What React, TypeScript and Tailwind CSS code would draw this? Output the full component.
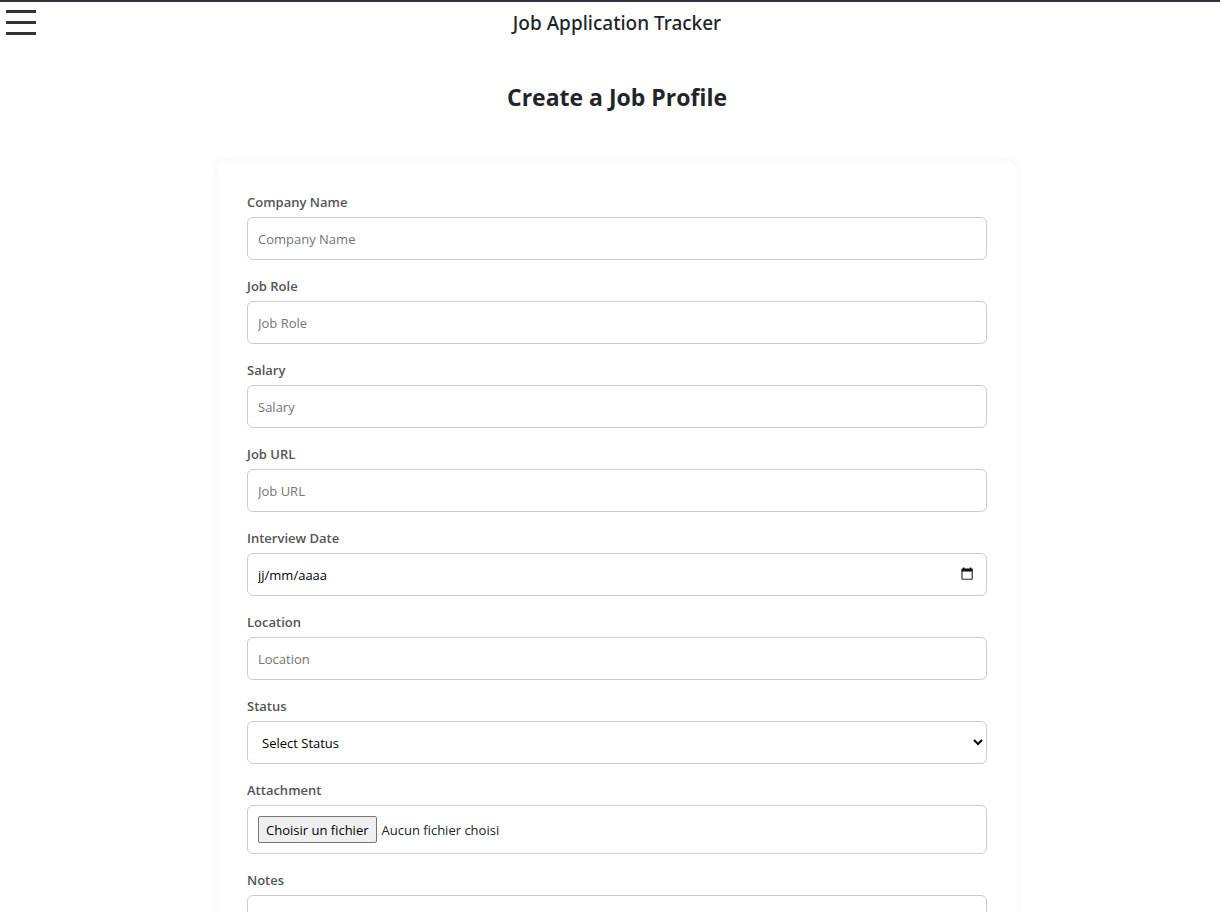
import React from "react";

const label = "mb-[3px] block text-[13px] leading-[23px] font-semibold text-[#555]";
const control =
  "block h-[43px] w-full rounded-md border border-[#ccc] bg-white px-[10px] text-[13px] text-black placeholder:text-[#757575]";

function TextField({ id, text }: { id: string; text: string }) {
  return (
    <div>
      <label htmlFor={id} className={label}>
        {text}
      </label>
      <input id={id} type="text" placeholder={text} className={control} />
    </div>
  );
}

function DateField() {
  return (
    <div>
      <label htmlFor="date" className={label}>
        Interview Date
      </label>
      <div className="flex h-[43px] w-full items-center rounded-md border border-[#ccc] bg-white pr-3 pl-[10px]">
        <input
          id="date"
          type="text"
          placeholder="jj/mm/aaaa"
          className="h-full min-w-0 flex-1 text-[13px] text-black outline-none placeholder:text-black"
        />
        <button type="button" aria-label="Interview Date" className="shrink-0 pb-[2px]">
          <svg width="14" height="14" viewBox="0 0 14 14">
            <path d="M3 0.6h1.4v2H3zM9.8 0.6h1.4v2H9.8z" fill="#000" />
            <path d="M1.5 2.2a.7.7 0 0 1 .7-.7h9.8a.7.7 0 0 1 .7.7V4.5H1.5z" fill="#000" />
            <rect x="2" y="3" width="10.2" height="9.3" rx=".6" fill="none" stroke="#222" strokeWidth="1.1" />
          </svg>
        </button>
      </div>
    </div>
  );
}

function StatusField() {
  return (
    <div>
      <label htmlFor="status" className={label}>
        Status
      </label>
      <select
        id="status"
        className="block h-[43px] w-full rounded-md border border-[#ccc] bg-white px-[10px] text-[13px] text-black"
      >
        <option>Select Status</option>
      </select>
    </div>
  );
}

function FileField() {
  return (
    <div>
      <label htmlFor="file" className={label}>
        Attachment
      </label>
      <label
        htmlFor="file"
        className="relative flex h-[49px] w-full items-center gap-[5px] rounded-md border border-[#ccc] bg-white px-[10px] text-[13px] text-[#212529]"
      >
        <input id="file" type="file" className="sr-only" />
        <span className="rounded-xs border border-[#767676] bg-[#efefef] px-[7px] pt-px leading-6 text-black">
          Choisir un fichier
        </span>
        <span className="pt-px leading-6">Aucun fichier choisi</span>
      </label>
    </div>
  );
}

export default function App() {
  return (
    <div className="min-h-screen border-t-2 border-[#34323f] bg-white font-['Open_Sans','Noto_Sans',sans-serif] text-[#212529]">
      <header className="flex h-[43px] items-start">
        <button type="button" aria-label="Menu" className="flex w-9 flex-col gap-2 pt-2 pl-[6px]">
          <span className="h-[3px] bg-[#333]" />
          <span className="h-[3px] bg-[#333]" />
          <span className="h-[3px] bg-[#333]" />
        </button>
        <p className="flex-1 pt-[6px] pr-[22px] text-center font-['Noto_Sans',sans-serif] text-[19px] leading-[30px] font-medium">
          Job Application Tracker
        </p>
      </header>
      <main className="pl-[14px]">
        <h1 className="pt-[34px] text-center text-[23px] leading-9 font-bold">Create a Job Profile</h1>
        <form className="mx-auto mt-[46px] flex w-full max-w-[800px] flex-col gap-[15px] rounded-[10px] bg-white p-[30px] shadow-[0_0_10px_rgba(0,0,0,0.05)]">
          <TextField id="company" text="Company Name" />
          <TextField id="role" text="Job Role" />
          <TextField id="salary" text="Salary" />
          <TextField id="url" text="Job URL" />
          <DateField />
          <TextField id="location" text="Location" />
          <StatusField />
          <FileField />
          <div>
            <label htmlFor="notes" className={label}>
              Notes
            </label>
            <textarea
              id="notes"
              rows={4}
              className="block w-full rounded-md border border-[#ccc] bg-white p-[10px] text-[13px] text-black"
            />
          </div>
        </form>
      </main>
    </div>
  );
}
